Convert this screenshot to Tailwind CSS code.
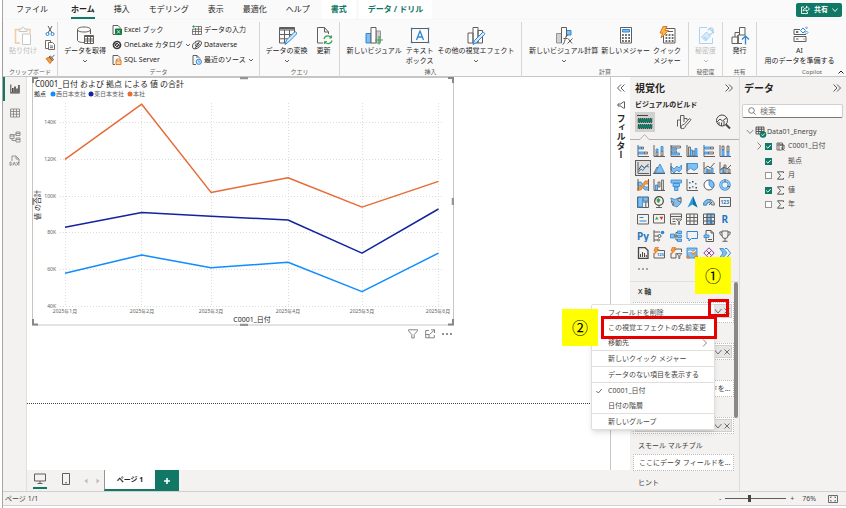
<!DOCTYPE html>
<html lang="ja">
<head>
  <meta charset="UTF-8" />
  <meta name="viewport" content="width=device-width, initial-scale=1" />
  <title>Data01_Energy - レポート</title>
  <script src="https://cdn.jsdelivr.net/npm/@tailwindcss/browser@4"></script>
  <style>
    body {
      font-family: 'Noto Sans', 'Noto Sans CJK JP', sans-serif;
    }
  </style>
</head>
<body class="bg-white text-[#252423] text-[7px] leading-[10px]">
<div class="h-screen flex flex-col ml-0.5 pb-0.5 border-l border-[#a8a6a4]">

  <!-- Tabs -->
  <header class="bg-[#fafafa] h-5 flex items-start pl-1 pr-1 text-[8px] leading-[18px]">
    <nav class="flex gap-px flex-grow">
      <a href="#" class="px-[9px] mr-1">ファイル</a>
      <a href="#" class="px-[9px] font-bold"><span class="block h-[19px] border-b-2 border-[#117865]">ホーム</span></a>
      <a href="#" class="px-[9px]">挿入</a>
      <a href="#" class="px-[9px]">モデリング</a>
      <a href="#" class="px-[9px]">表示</a>
      <a href="#" class="px-[9px]">最適化</a>
      <a href="#" class="px-[9px]">ヘルプ</a>
      <a href="#" class="px-[9px] ml-0.5 bg-white text-[#117865] font-bold">書式</a>
      <a href="#" class="px-[9px] ml-0.5 bg-white text-[#117865] font-bold">データ / ドリル</a>
    </nav>
    <button class="mt-[3px] h-3.5 w-[46px] rounded-xs bg-[#117865] text-white text-[7px] leading-[14px] font-bold flex items-center justify-center gap-1">
      <svg class="w-2.5 h-2.5" viewBox="0 0 10 10" fill="none" stroke="white" stroke-width=".9"><path d="M4 2H1.500v6.500h6V7M3 6c.3-2 1.500-3 3.500-3V1.200L9.500 4 6.500 6.500V5C5 5 4 5.300 3 6z"/></svg>
      共有
      <svg class="w-1.5 h-1.5" viewBox="0 0 6 6" fill="none" stroke="white" stroke-width=".9"><path d="M.5 1.500 3 4.500 5.500 1.500"/></svg>
    </button>
  </header>

  <!-- Ribbon -->
  <section class="bg-[#fafafa] border-b border-[#c8c6c4] h-[57px] pt-0.5 grid grid-cols-[55fr_202fr_80fr_182fr_167fr_34fr_34fr_89fr] shadow-sm">
    <div class="border-r border-[#d8d6d4] flex flex-col">
      <div class="h-[45px] flex items-start pt-1 pl-1.5 gap-2">
        <button class="flex flex-col items-center text-[#bdbbb9]">
          <svg class="w-5 h-5" viewBox="0 0 20 20" fill="none" stroke-width="1"><path d="M7 17H2.500V3.500H6M14 3.500h3V7" stroke="#f3cda4" stroke-width="1.500"/><path d="M6 5.500V3h2.500c0-2.500 3-2.500 3 0H14v2.500z" stroke="#c8c6c4"/><path d="M9.500 8h8v10.500h-8z" stroke="#c8c6c4" fill="#fff"/></svg>
          貼り付け
        </button>
        <div class="flex flex-col gap-1 items-center">
          <button aria-label="切り取り"><svg class="w-2.5 h-2.5" viewBox="0 0 10 10" fill="none" stroke="#605e5c"><path d="M3 0l4 7M7 0L3 7"/><circle cx="2.500" cy="8" r="1.500" stroke="#2b88d8"/><circle cx="7.500" cy="8" r="1.500" stroke="#2b88d8"/></svg></button>
          <button aria-label="コピー"><svg class="w-2.5 h-2.5" viewBox="0 0 10 10" fill="#fff" stroke="#605e5c" stroke-width=".9"><path d="M.5.5h5v8h-5z"/><path d="M3.500 2.500h4l2 2v5h-6zM5 6h3M5 7.700h3"/></svg></button>
          <button aria-label="書式のコピー"><svg class="w-2.5 h-2.5" viewBox="0 0 10 10" fill="none"><path d="M1 4.500l4-1.500 2.500 3-2.500 3.500z" fill="#f5a04c" stroke="#d9761a"/><path d="M4 3l1.500-1 3 3.500-1 1.200zM7 3.500L9.500.8" stroke="#605e5c"/></svg></button>
        </div>
      </div>
      <p class="text-center text-[6px] text-[#605e5c]">クリップボード</p>
    </div>

    <div class="border-r border-[#d8d6d4] flex flex-col">
      <div class="h-[45px] flex items-start pl-1.5">
        <button class="flex flex-col items-center pt-1 mr-1.5">
          <svg class="w-5 h-5" viewBox="0 0 20 20" fill="none" stroke="#605e5c"><path d="M9 16.500c-4 0-6.500-1-6.500-2V3.500C2.500 2 5 1 9 1s6.500 1 6.500 2.500V8M2.500 3.500C2.500 5 5 6 9 6s6.500-1 6.500-2.500"/><path d="M9.500 9.500h9v8h-9z" fill="#fff"/><path d="M9.500 10.500h9M9.500 13h9M9.500 15h9M12.500 9.500v8M15.500 9.500v8"/></svg>
          データを取得
          <svg class="w-1.5 h-1.5 mt-0.5" viewBox="0 0 6 6" fill="none" stroke="#605e5c"><path d="M1 2l2 2 2-2"/></svg>
        </button>
        <div class="flex flex-col w-20 leading-[15px]">
          <button class="flex items-center gap-0.5"><svg class="w-2.5 h-2.5" viewBox="0 0 10 10" fill="none" stroke="#605e5c"><path d="M1 .5h5l2 2v1M1 .5v9h2"/><path d="M3.500 4h6v5.500h-6z" fill="#107c41" stroke="#107c41"/><path d="M5 5.200L8 8.500M8 5.200L5 8.500" stroke="#fff" stroke-width=".8"/></svg>Excel ブック</button>
          <button class="flex items-center gap-0.5"><svg class="w-2.5 h-2.5" viewBox="0 0 10 10" fill="none" stroke="#3b3a39"><circle cx="5" cy="5" r="3.500" stroke-width="1.700"/><path d="M1 4c3-2 3 3 8 1.500M5 3L7 5 5 7 3 5z"/></svg>OneLake カタログ<svg class="w-1.5 h-1.5" viewBox="0 0 6 6" fill="none" stroke="#605e5c"><path d="M1 2l2 2 2-2"/></svg></button>
          <button class="flex items-center gap-0.5"><svg class="w-2.5 h-2.5" viewBox="0 0 10 10" fill="none" stroke="#605e5c"><path d="M1 .5h5l2 2v1M1 .5v9h2"/><path d="M4 5.500h5v4H4z" fill="#fbd6ae" stroke="#e07a1c"/><ellipse cx="6.500" cy="5" rx="2.500" ry="1" fill="#fff" stroke="#e07a1c"/></svg>SQL Server</button>
        </div>
        <div class="flex flex-col leading-[15px]">
          <button class="flex items-center gap-0.5"><svg class="w-2.5 h-2.5" viewBox="0 0 10 10" fill="none" stroke="#605e5c" stroke-width=".8"><path d="M3.500 1.500h6v8h-9V4M.5 6.500h9M.5 4.200h9M3.500 3v6.500M6.500 1.500v8"/><path d="M0 1.500h3.500M1.700 0v3.500" stroke="#2d9d4c"/></svg>データの入力</button>
          <button class="flex items-center gap-0.5"><svg class="w-2.5 h-2.5" viewBox="0 0 10 10" fill="none" stroke="#3b3a39" stroke-width=".9"><path d="M3 2c2-1.500 7-1.500 6.500 1S7 8 4 8.700.3 8 .6 5.500 2 3 4 2.700"/><path d="M4 6.500C2.500 5.500 4.500 3 6.500 3.500S6.500 7 4 6.500zM3 8.500L7.500 1.500"/></svg>Dataverse</button>
          <button class="flex items-center gap-0.5"><svg class="w-2.5 h-2.5" viewBox="0 0 10 10" fill="none" stroke="#605e5c"><path d="M4 9.500H1v-9h4l3 3M5 .5V3"/><circle cx="6.800" cy="6.800" r="2.600" fill="#d5e9fa" stroke="#2b88d8"/><path d="M6.700 5.500V7H8" stroke="#2b88d8" stroke-width=".7"/></svg>最近のソース<svg class="w-1.5 h-1.5" viewBox="0 0 6 6" fill="none" stroke="#605e5c"><path d="M1 2l2 2 2-2"/></svg></button>
        </div>
      </div>
      <p class="text-center text-[6px] text-[#605e5c]">データ</p>
    </div>

    <div class="border-r border-[#d8d6d4] flex flex-col">
      <div class="h-[45px] flex items-start justify-center pt-1 gap-1.5">
        <button class="flex flex-col items-center">
          <svg class="w-5 h-5" viewBox="0 0 20 20" fill="none" stroke="#605e5c"><path d="M9 17H2.500V1.500h15V7M2.500 4h15M2.500 8.500H16M2.500 12.800H11M7.500 4v13M12.500 4v7"/><path d="M2.500 2.500h15" stroke-width="1.500"/><path d="M8 18.500l1.500-4.500 8-8c1-1 3 1 2 2l-8 8z" fill="#d5e9fa" stroke="#2b88d8"/></svg>
          データの変換
          <svg class="w-1.5 h-1.5 mt-0.5" viewBox="0 0 6 6" fill="none" stroke="#605e5c"><path d="M1 2l2 2 2-2"/></svg>
        </button>
        <button class="flex flex-col items-center">
          <svg class="w-5 h-5" viewBox="0 0 20 20" fill="none" stroke="#605e5c"><path d="M9 17H3.500V1.500h7l4 4.500v2M10.500 1.500V6h4"/><path d="M10 13c1-4 6-4 7.500-1V9.500M17.500 12H15M18 14.500c-1 4-6 4-7.500 1V18M10.500 15.500H13" stroke="#3aa655" stroke-width="1.200"/></svg>
          更新
        </button>
      </div>
      <p class="text-center text-[6px] text-[#605e5c]">クエリ</p>
    </div>

    <div class="border-r border-[#d8d6d4] flex flex-col">
      <div class="h-[45px] flex items-start justify-center pt-1 gap-1">
        <button class="flex flex-col items-center">
          <svg class="w-5 h-5" viewBox="0 0 20 20" fill="none" stroke="#605e5c"><path d="M12 5h4.500v12H12z" fill="#d2d0ce" stroke="#979593"/><path d="M2 7.500h5V17H2z" fill="#83beec" stroke="#2b88d8"/><path d="M7 1.500h5V17H7z" fill="#fff"/><path d="M11 14h8M15 10v8.500" stroke="#3aa655" stroke-width="1.200"/></svg>
          新しいビジュアル
        </button>
        <button class="flex flex-col items-center">
          <svg class="w-5 h-5" viewBox="0 0 20 20" fill="none"><path d="M1.500 2.500h17v14h-17z" stroke="#605e5c"/><path d="M.8 1.800h1.800v1.800H.8zM17.500 1.800h1.800v1.800h-1.800zM.8 15.500h1.800v1.800H.8zM17.500 15.500h1.800v1.800h-1.800z" fill="#2b88d8"/><path d="M6.500 14L10 5l3.500 9M7.700 11h4.600" stroke="#2b88d8" stroke-width="1.300"/></svg>
          テキスト<br />ボックス
        </button>
        <button class="flex flex-col items-center">
          <svg class="w-5 h-5" viewBox="0 0 20 20" fill="none" stroke="#605e5c"><path d="M2 7h5v10H2zM7 1.500h5V17H7zM12 4.500h4.500V17H12z" fill="#fff"/><path d="M7 18.500l1.500-4 8-8c1-1 3 1 2 2l-8 8z" fill="#d5e9fa" stroke="#2b88d8"/></svg>
          その他の視覚エフェクト
          <svg class="w-1.5 h-1.5 mt-0.5" viewBox="0 0 6 6" fill="none" stroke="#605e5c"><path d="M1 2l2 2 2-2"/></svg>
        </button>
      </div>
      <p class="text-center text-[6px] text-[#605e5c]">挿入</p>
    </div>

    <div class="border-r border-[#d8d6d4] flex flex-col">
      <div class="h-[45px] flex items-start justify-center pt-1 gap-[3px]">
        <button class="flex flex-col items-center">
          <svg class="w-5 h-5" viewBox="0 0 20 20" fill="none" stroke="#605e5c"><path d="M2.500 7.500h5V17h-5z" fill="#d2d0ce" stroke="#979593"/><path d="M12.500 4.500H17V9h-4.500z" fill="#83beec" stroke="#2b88d8"/><path d="M7.500 17V1.500h5V11"/><path d="M8.500 18.500c2.500 0 2.500-10 5.500-9.500M9.500 12.500h4M14 12.500l4 5M18.500 12.500l-5 5"/></svg>
          新しいビジュアル計算
          <svg class="w-1.5 h-1.5 mt-0.5" viewBox="0 0 6 6" fill="none" stroke="#605e5c"><path d="M1 2l2 2 2-2"/></svg>
        </button>
        <button class="flex flex-col items-center">
          <svg class="w-5 h-5" viewBox="0 0 20 20" fill="none"><path d="M4.500 1.500h11v15.500h-11z" stroke="#605e5c" fill="#fff"/><path d="M6.500 3.500h7v2.500h-7z" fill="#83beec" stroke="#2b88d8"/><path d="M6 9h8M6 12h8M6 15h8" stroke="#3b3a39" stroke-width="1.600" stroke-dasharray="1.800 1.300"/></svg>
          新しいメジャー
        </button>
        <button class="flex flex-col items-center">
          <svg class="w-5 h-5" viewBox="0 0 20 20" fill="none"><path d="M6.500 2.500H18V17H6.500z" stroke="#605e5c" fill="#fff"/><path d="M9 5.500h7" stroke="#605e5c"/><path d="M8.500 9h8M8.500 12h8M8.500 15h8" stroke="#3b3a39" stroke-width="1.600" stroke-dasharray="1.800 1.300"/><path d="M6 .5h4L8 4.500h3.500L4 12l1.500-5H3z" fill="#fbb454" stroke="#e07a1c"/></svg>
          クイック<br />メジャー
        </button>
      </div>
      <p class="text-center text-[6px] text-[#605e5c]">計算</p>
    </div>

    <div class="border-r border-[#d8d6d4] flex flex-col">
      <div class="h-[45px] flex items-start justify-center pt-1">
        <button class="flex flex-col items-center text-[#bdbbb9]">
          <svg class="w-5 h-5" viewBox="0 0 20 20" fill="none" stroke="#a9d3f2"><path d="M11 1.500H3.500V17.500h13V12"/><path d="M5.500 11l5-5 4 4-5 5z" fill="#d5e9fa"/><path d="M8 11l3 3M12 4.500c1-3 4-3.500 5-1s-1 5-4 5M14 3l4 4" stroke-width="1.300"/></svg>
          秘密度
          <svg class="w-1.5 h-1.5 mt-0.5" viewBox="0 0 6 6" fill="none" stroke="#bdbbb9"><path d="M1 2l2 2 2-2"/></svg>
        </button>
      </div>
      <p class="text-center text-[6px] text-[#605e5c]">秘密度</p>
    </div>

    <div class="border-r border-[#d8d6d4] flex flex-col">
      <div class="h-[45px] flex items-start justify-center pt-1">
        <button class="flex flex-col items-center">
          <svg class="w-5 h-5" viewBox="0 0 20 20" fill="none" stroke="#605e5c"><path d="M2 11h6v6.500H2zM5 11V6.500h4.500M8 17.500V9M9.500 9V1.500H15V9M12 17.500H8V9h7"/><path d="M15.500 18.500V10M12 13.500l3.500-3.500 3.500 3.500" stroke="#2b88d8" stroke-width="1.300"/></svg>
          発行
        </button>
      </div>
      <p class="text-center text-[6px] text-[#605e5c]">共有</p>
    </div>

    <div class="flex flex-col">
      <div class="h-[45px] flex items-start justify-center pt-1 pr-1">
        <button class="flex flex-col items-center">
          <svg class="w-5 h-5" viewBox="0 0 20 20" fill="none" stroke="#605e5c"><path d="M10 3.500H4v5h12M4 10.500h12v5H4zM6 6h2.500M6 13h2.500M13.500 13h1"/><path d="M6 6h2" stroke-width="1.600"/><path d="M13 2l2.500 2.500L13 7l-2.500-2.500z" fill="#fff" stroke="#2b88d8"/><path d="M16.500 5L18 6.500 16.500 8 15 6.500zM16.500.8l1 1-1 1-1-1z" stroke="#2b88d8" stroke-width=".8"/></svg>
          AI<br />用のデータを準備する
        </button>
      </div>
      <div class="flex items-center justify-end pr-0.5 gap-4 text-[6px] text-[#605e5c]">
        Copilot
        <button aria-label="リボンを折りたたむ"><svg class="w-1.5 h-1.5" viewBox="0 0 6 6" fill="none" stroke="#252423"><path d="M.5 4.500 3 2l2.500 2.500"/></svg></button>
      </div>
    </div>
  </section>

  <div class="flex flex-grow min-h-0">
    <!-- View switcher -->
    <aside class="w-6 shrink-0 bg-[#f3f2f1] border-r border-[#e1dfdd] flex flex-col">
      <button class="h-6 w-full flex items-center justify-center border-l-2 border-[#117865] pr-0.5" aria-label="レポート ビュー"><svg class="w-2.5 h-2.5" viewBox="0 0 10 10" fill="#484644"><path d="M.3.500h1V8.300h8.500v1.200H.3z"/><path d="M2 4h1.600v4H2zM4.200 2.500h1.600V8H4.200zM6.300 4.500h1.500V8H6.300zM8.200 1h1.500v7H8.200z"/></svg></button>
      <button class="h-6 flex items-center justify-center" aria-label="テーブル ビュー"><svg class="w-2.5 h-2.5" viewBox="0 0 10 10" fill="none" stroke="#8a8886" stroke-width=".9"><path d="M.5 1h9v8h-9zM.5 3.500h9M.5 6.200h9M3.500 1v8M6.500 1v8"/></svg></button>
      <button class="h-6 flex items-center justify-center" aria-label="モデル ビュー"><svg class="w-3 h-3" viewBox="0 0 12 12" fill="none" stroke="#8a8886" stroke-width=".9"><path d="M1 3.500h4v4H1zM7 1h4v3.500H7zM7 7h4v4H7zM1 5h4M7 2.500h4M7 8.500h4M3 7.500V9.500h4M5 4.500l2-1.500"/></svg></button>
      <button class="h-6 flex items-center justify-center" aria-label="DAX クエリ ビュー"><svg class="w-3 h-3" viewBox="0 0 12 12" fill="none" stroke="#8a8886" stroke-width=".9"><path d="M3 6V1h4l3 3v5.500M7 1v3h3M1 7v3.500c2.500 0 2.500-3.500 0-3.500M4 10.500L5.300 7l1.300 3.500M7.500 7l2.300 3.500M9.800 7l-2.300 3.500"/></svg></button>
    </aside>

    <div class="flex flex-col flex-grow min-w-0">
      <div class="flex flex-grow min-h-0">
        <!-- Report canvas -->
        <main class="flex-grow min-w-0 pl-[5px] bg-white flex flex-col">
          <div class="w-[422px] max-w-full">
            <svg class="w-full h-auto block" viewBox="0 0 422 249" fill="none">
              <path d="M.5.500h421v247.500H.5z" stroke="#c8c6c4"/>
              <path d="M1 6V1h5M416 1h5v5M1 242v5.500h5M416 247.500h5V242" stroke="#8a8886" stroke-width="2"/>
              <path d="M208 1h8M208 248h8M1 121v7M421 121v7" stroke="#979593" stroke-width="2.500"/>
              <text x="3" y="9.500" font-size="8" fill="#252423">C0001_日付 および 拠点 による 値 の合計</text>
              <g font-size="6" fill="#605e5c">
                <text x="2" y="19" fill="#252423">拠点</text>
                <circle cx="21" cy="17" r="2.500" fill="#118dff"/><text x="24" y="19">西日本支社</text>
                <circle cx="59" cy="17" r="2.500" fill="#12239e"/><text x="62" y="19">東日本支社</text>
                <circle cx="98" cy="17" r="2.500" fill="#e66c37"/><text x="101" y="19">本社</text>
              </g>
              <path d="M28 45.500h383M28 82.500h383M28 119.500h383M28 155.500h383M28 192.500h383M28 229.500h383M33.500 26v203M109.500 26v203M179.500 26v203M256.500 26v203M330.500 26v203M406.500 26v203" stroke="#dedcda" stroke-dasharray="1 2"/>
              <g font-size="5" fill="#605e5c" text-anchor="end">
                <text x="24" y="47">140K</text><text x="24" y="84">120K</text><text x="24" y="121">100K</text>
                <text x="24" y="157">80K</text><text x="24" y="194">60K</text><text x="24" y="231">40K</text>
              </g>
              <g font-size="5" fill="#605e5c" text-anchor="middle">
                <text x="33" y="236">2025年1月</text><text x="110" y="236">2025年2月</text><text x="179" y="236">2025年3月</text>
                <text x="256" y="236">2025年4月</text><text x="330" y="236">2025年5月</text><text x="406" y="236">2025年6月</text>
              </g>
              <text x="220" y="245" font-size="7" fill="#252423" text-anchor="middle">C0001_日付</text>
              <text transform="translate(8 128) rotate(-90)" font-size="7" fill="#252423" text-anchor="middle">値 の合計</text>
              <g stroke-width="1.500" stroke-linejoin="round">
                <path d="M33 82.300 109.700 27.200 179 115.400 256 100.700 330 130.100 406.500 104.400" stroke="#e66c37"/>
                <path d="M33 150.300 109.700 135.600 179 139.300 256 143 330 176.100 406.500 132" stroke="#12239e"/>
                <path d="M33 196.200 109.700 177.900 179 190.700 256 185.200 330 214.600 406.500 176.100" stroke="#118dff"/>
              </g>
            </svg>
            <div class="flex justify-end gap-[7px] h-4 items-center pr-0.5">
              <button aria-label="フィルター"><svg class="w-2.5 h-2.5" viewBox="0 0 10 10" fill="none" stroke="#797775" stroke-width=".9"><path d="M.5.800h9v1L6.200 5.500V9H3.800V5.500L.5 1.800z"/></svg></button>
              <button aria-label="フォーカス モード"><svg class="w-2.5 h-2.5" viewBox="0 0 10 10" fill="none" stroke="#797775" stroke-width=".9"><path d="M4 1.500H.7v7.300h8.600V6M4.500 5.500l5-4.500M6 .8h3.500V4M.7 5.500H4v3"/></svg></button>
              <button aria-label="その他のオプション"><svg class="w-2.5 h-2.5" viewBox="0 0 10 10" fill="#605e5c"><circle cx="1" cy="5" r=".9"/><circle cx="5" cy="5" r=".9"/><circle cx="9" cy="5" r=".9"/></svg></button>
            </div>
          </div>
          <svg class="h-px w-full -ml-[5px] mt-[61px] shrink-0"><path d="M0 .5H4000" stroke="#484644" stroke-width="1" stroke-dasharray="1 1"/></svg>
        </main>

        <!-- Filter pane, collapsed -->
        <aside class="w-5 shrink-0 border-l border-[#c8c6c4] bg-white flex flex-col items-center pt-[7px] gap-[7px]">
          <button aria-label="展開"><svg class="w-2 h-2" viewBox="0 0 8 8" fill="none" stroke="#484644" stroke-width=".9"><path d="M4 .5.500 4 4 7.500M7.500.5 4 4l3.500 3.500"/></svg></button>
          <svg class="w-2 h-2 mt-0.5" viewBox="0 0 8 8" fill="none" stroke="#484644" stroke-width=".9"><path d="M7.500.800v6.400H6.700L3.500 5H1V3h2.500L6.700.800z"/></svg>
          <h2 class="[writing-mode:vertical-rl] text-[9px] font-bold -mt-0.5">フィルター</h2>
        </aside>
      </div>

      <!-- Page tabs -->
      <div class="h-[21px] shrink-0 bg-[#f3f2f1] flex items-stretch">
        <button class="w-[25px] flex flex-col items-center justify-end" aria-label="デスクトップ レイアウト">
          <svg class="w-3 h-3" viewBox="0 0 12 12" fill="none" stroke="#605e5c"><path d="M.5 2h11v7H.5zM6 9v2M3.500 11.500h5"/></svg>
          <span class="w-3.5 h-0.5 bg-[#117865] mt-[3px] mb-0.5"></span>
        </button>
        <button class="w-7 flex items-start pt-[3px] justify-center" aria-label="モバイル レイアウト"><svg class="w-2 h-3" viewBox="0 0 8 12" fill="none" stroke="#605e5c"><path d="M.5.500h7v11h-7zM3 9.800h2"/></svg></button>
        <button class="w-3 flex items-center justify-center" aria-label="前のページ"><svg class="w-1 h-1.5" viewBox="0 0 4 6" fill="#bdbbb9"><path d="M3.500.5v5L.5 3z"/></svg></button>
        <button class="w-3 flex items-center justify-center" aria-label="次のページ"><svg class="w-1 h-1.5" viewBox="0 0 4 6" fill="#bdbbb9"><path d="M.5.500v5l3-2.500z"/></svg></button>
        <button class="w-[51px] bg-white border-l border-l-[#979593] border-b-2 border-b-[#117865] font-bold">ページ 1</button>
        <button class="w-6 bg-[#117865] text-white flex items-center justify-center" aria-label="新しいページ"><svg class="w-2 h-2" viewBox="0 0 8 8" stroke="white" stroke-width="1.600"><path d="M4 1v6M1 4h6"/></svg></button>
      </div>
    </div>

    <!-- Visualizations pane -->
    <aside class="relative w-[110px] shrink-0 bg-[#f3f2f1] border-r border-[#dedcda] flex flex-col">
      <div class="flex items-center justify-between pl-[5px] pr-1.5 pt-[5px]">
        <h2 class="text-[10px] leading-3 font-bold">視覚化</h2>
        <button aria-label="折りたたむ"><svg class="w-2 h-2" viewBox="0 0 8 8" fill="none" stroke="#484644" stroke-width=".9"><path d="M.5.500 4 4 .5 7.500M4 .5 7.500 4 4 7.500"/></svg></button>
      </div>
      <p class="pl-[5px] pt-1.5 font-semibold">ビジュアルのビルド</p>
      <div class="flex justify-between pl-[5px] pr-1.5 pt-0.5">
        <button class="w-5 h-5 bg-[#d2d0ce] flex items-center justify-center" aria-label="ビルド"><svg class="w-4 h-4" viewBox="0 0 16 16" fill="none"><path d="M0 1.500h11" stroke="#484644"/><path d="M1 4.500h14v4H1zM1 10.500h14v4H1z" fill="#117865" stroke="#484644" stroke-dasharray="1 1"/></svg></button>
        <button class="w-5 h-5 flex items-center justify-center" aria-label="書式"><svg class="w-4 h-4" viewBox="0 0 16 16" fill="none" stroke="#605e5c"><path d="M1.500 6h3v7M4.500 14V1.500h3.500V8M8 4.500h3V6M1.500 6v6.500M5 14.500c0-3 1-4 3-4l5-5.500c1-1 2.500.5 1.500 1.500L9.500 12c0 2-2 3-4.500 2.500z"/></svg></button>
        <button class="w-5 h-5 flex items-center justify-center" aria-label="分析"><svg class="w-4 h-4" viewBox="0 0 16 16" fill="none" stroke="#484644"><circle cx="7" cy="6.500" r="5.500"/><path d="M2 8l3-3 2.500 2L12 3.500M4 8v3M6.500 8.500V12M9 7v4.500" /><path d="M11 10.500l4 4" stroke-width="2"/></svg></button>
      </div>
      <svg class="w-full h-[7px] mt-px shrink-0" fill="none" stroke="#b3b0ad"><path d="M0 6.500h10l4.500-5 4.500 5H4000"/></svg>

      <div id="visual-grid" class="grid grid-cols-6 gap-x-[3px] gap-y-[3px] pl-1.5 pr-[7px] pt-1 justify-items-center"></div>
      <button class="self-start ml-2 h-3.5 mt-0.5 flex items-center" aria-label="その他のビジュアル"><svg class="w-2.5 h-1" viewBox="0 0 10 4" fill="#484644"><circle cx="1" cy="2" r=".8"/><circle cx="5" cy="2" r=".8"/><circle cx="9" cy="2" r=".8"/></svg></button>

      <!-- Field wells -->
      <div class="flex flex-grow min-h-0 mt-[5px] border-t border-[#e1dfdd] overflow-hidden">
        <div class="flex flex-col flex-grow min-w-0 pl-[3px] pt-1 text-[#3b3a39]">
          <h3 class="pl-[5px] h-4 leading-3 shrink-0 font-semibold">X 軸</h3>
          <div class="h-[21px] shrink-0 border border-dotted border-[#bdbbb9] bg-white p-px">
            <div class="h-3.5 bg-[#e8e6e4] border border-[#d2d0ce] flex items-center justify-end gap-0.5 pr-px">
              <svg class="w-2 h-2" viewBox="0 0 8 8" fill="none" stroke="#605e5c" stroke-width=".9"><path d="M.5 2 4 6l3.500-4"/></svg>
              <svg class="w-1.5 h-1.5" viewBox="0 0 6 6" fill="none" stroke="#605e5c" stroke-width=".9"><path d="M.5.500l5 5M5.500.5l-5 5"/></svg>
            </div>
          </div>
          <div class="mt-5 h-[17px] shrink-0 border border-dotted border-[#bdbbb9] bg-white p-px">
            <div class="h-[13px] bg-[#e8e6e4] border border-[#d2d0ce] flex items-center justify-end gap-0.5 pr-px">
              <svg class="w-2 h-2" viewBox="0 0 8 8" fill="none" stroke="#605e5c" stroke-width=".9"><path d="M.5 2 4 6l3.500-4"/></svg>
              <svg class="w-1.5 h-1.5" viewBox="0 0 6 6" fill="none" stroke="#605e5c" stroke-width=".9"><path d="M.5.500l5 5M5.500.5l-5 5"/></svg>
            </div>
          </div>
          <div class="mt-5 h-[17px] shrink-0 border border-dotted border-[#bdbbb9] bg-white pl-[5px] leading-[15px] truncate">ここにデータ フィールドを...</div>
          <div class="mt-5 h-[17px] shrink-0 border border-dotted border-[#bdbbb9] bg-white p-px">
            <div class="h-[13px] bg-[#e8e6e4] border border-[#d2d0ce] flex items-center justify-end gap-0.5 pr-px">
              <svg class="w-2 h-2" viewBox="0 0 8 8" fill="none" stroke="#605e5c" stroke-width=".9"><path d="M.5 2 4 6l3.500-4"/></svg>
              <svg class="w-1.5 h-1.5" viewBox="0 0 6 6" fill="none" stroke="#605e5c" stroke-width=".9"><path d="M.5.500l5 5M5.500.5l-5 5"/></svg>
            </div>
          </div>
          <h3 class="pl-[5px] h-5 pt-[7px] shrink-0">スモール マルチプル</h3>
          <div class="h-[17px] shrink-0 border border-dotted border-[#bdbbb9] bg-white pl-[5px] leading-[15px] truncate">ここにデータ フィールドを...</div>
          <h3 class="pl-[5px] h-5 pt-[7px] shrink-0">ヒント</h3>
        </div>
        <div class="w-1 mr-px shrink-0"><div class="w-1 h-[136px] rounded-full bg-[#8a8886]"></div></div>
      </div>

      <!-- Field context menu -->
      <ul class="absolute -left-[39px] top-[227px] w-[124px] bg-white rounded-xs shadow-md border border-[#e1dfdd] z-10 leading-[15px] text-[#484644]">
        <li><button class="pl-4">フィールドを削除</button></li>
        <li><button class="pl-4">この視覚エフェクトの名前変更</button></li>
        <li class="border-b border-[#e1dfdd]"><button class="w-full pl-4 pr-1.5 flex items-center justify-between">移動先<svg class="w-1.5 h-2" viewBox="0 0 6 8" fill="none" stroke="#797775" stroke-width=".9"><path d="M1 .5 4.500 4 1 7.500"/></svg></button></li>
        <li class="border-b border-[#e1dfdd]"><button class="pl-4">新しいクイック メジャー</button></li>
        <li class="border-b border-[#e1dfdd]"><button class="pl-4">データのない項目を表示する</button></li>
        <li><button class="flex items-center"><svg class="w-1.5 h-1.5 ml-1 mr-1.5" viewBox="0 0 6 6" fill="none" stroke="#605e5c" stroke-width=".9"><path d="M.3 3l2 2L5.800 1"/></svg>C0001_日付</button></li>
        <li class="border-b border-[#e1dfdd]"><button class="pl-4">日付の階層</button></li>
        <li><button class="pl-4">新しいグループ</button></li>
      </ul>

      <!-- Step callouts -->
      <div class="absolute left-[65px] top-[180px] w-9 h-[37px] z-20 bg-[#ffff00] text-black text-[16px] flex items-center justify-center">①</div>
      <div class="absolute left-[78px] top-[222px] w-[21px] h-[18px] z-20 border-3 border-[#e60000]"></div>
      <div class="absolute -left-[68px] top-[232px] w-9 h-[37px] z-20 bg-[#ffff00] text-black text-[16px] flex items-center justify-center">②</div>
      <div class="absolute -left-[29px] top-[239px] w-[116px] h-[23px] z-20 border-3 border-[#e60000]"></div>
    </aside>

    <!-- Data pane -->
    <aside class="w-[106px] shrink-0 bg-[#f3f2f1] flex flex-col">
      <div class="flex items-center justify-between pl-1 pr-[5px] pt-[5px]">
        <h2 class="text-[10px] leading-3 font-bold">データ</h2>
        <button aria-label="折りたたむ"><svg class="w-2 h-2" viewBox="0 0 8 8" fill="none" stroke="#484644" stroke-width=".9"><path d="M.5.500 4 4 .5 7.500M4 .5 7.500 4 4 7.500"/></svg></button>
      </div>
      <label class="mt-2.5 ml-0.5 mr-[3px] h-3.5 bg-white border border-[#d2d0ce] border-b-[#797775] rounded-xs flex items-center gap-1 pl-[5px]">
        <svg class="w-2 h-2 shrink-0" viewBox="0 0 8 8" fill="none" stroke="#605e5c" stroke-width=".8"><circle cx="3.500" cy="3.500" r="2.800"/><path d="M5.500 5.500 7.700 7.700"/></svg>
        <input type="search" placeholder="検索" aria-label="検索" class="w-full min-w-0 text-[8px] leading-3 outline-none placeholder:text-[#797775]" />
      </label>
      <div class="flex items-center h-[14px] mt-[7px] pl-1.5 text-[#484644]">
        <svg class="w-2 h-2 mr-px" viewBox="0 0 8 8" fill="none" stroke="#797775" stroke-width=".9"><path d="M.8 2 4 5.500 7.200 2"/></svg>
        <svg class="w-3 h-3" viewBox="0 0 12 12" fill="none" stroke="#484644" stroke-width=".9"><path d="M1 1h8v7H1zM1 3.200h8M1 5.500h8M3.700 1v7M6.400 1v7"/><circle cx="8" cy="8.500" r="3.300" fill="#117865" stroke="none"/><path d="M6.500 8.500l1.200 1.200L9.700 7.500" stroke="#fff"/></svg>
        Data01_Energy
      </div>
      <ul id="field-list" class="pl-[15px] text-[#484644]"></ul>
    </aside>
  </div>

  <!-- Status bar -->
  <footer class="h-[15px] shrink-0 bg-[#f3f2f1] border-y border-[#d2d0ce] flex items-center justify-between pl-0.5 pr-2 text-[#484644]">
    <span>ページ 1/1</span>
    <div class="flex items-center gap-1">
      <button aria-label="縮小">-</button>
      <input type="range" min="0" max="100" value="39" aria-label="ズーム" class="w-[61px] h-2 appearance-none bg-transparent [&::-webkit-slider-runnable-track]:h-px [&::-webkit-slider-runnable-track]:bg-[#605e5c] [&::-webkit-slider-thumb]:appearance-none [&::-webkit-slider-thumb]:w-[3px] [&::-webkit-slider-thumb]:h-[7px] [&::-webkit-slider-thumb]:-mt-[3px] [&::-webkit-slider-thumb]:bg-[#484644]" />
      <button aria-label="拡大">+</button>
      <span class="ml-1 mr-2">76%</span>
      <button aria-label="ページに合わせる"><svg class="w-2.5 h-2" viewBox="0 0 10 8" fill="none" stroke="#605e5c" stroke-width=".9"><path d="M.5.500h9v7h-9zM2.500 3V2h1.200M6.300 2h1.200v1M7.500 5v1H6.300M3.700 6H2.500V5"/></svg></button>
    </div>
  </footer>
</div>

<script>
  // Icon helpers: gray / blue outlines and blue fill
  const g = d => `<path d="${d}" stroke="#605e5c"/>`;
  const b = d => `<path d="${d}" stroke="#2b88d8"/>`;
  const f = d => `<path d="${d}" fill="#83beec" stroke="#2b88d8" stroke-width=".8"/>`;
  const w = d => `<path d="${d}" fill="#d2d0ce" stroke="#605e5c" stroke-width=".8"/>`;
  const o = d => `<path d="${d}" fill="#f5a04c" stroke="#d9761a" stroke-width=".8"/>`;
  const t = (s, x, y, size) => `<text x="${x}" y="${y}" font-size="${size}" font-weight="bold" fill="#1f78c1">${s}</text>`;
  const axis = g('M1 0v11.500h11');

  const visuals = [
    ['積み上げ横棒グラフ', axis + f('M1.500 2h3v2h-3zM1.500 7h6v2h-6z') + w('M4.500 2h2v2h-2zM7.500 7h3v2h-3z')],
    ['積み上げ縦棒グラフ', axis + w('M3 7h2v4H3zM8 6h2v5H8z') + f('M3 4h2v3H3zM8 1.500h2V6H8z')],
    ['集合横棒グラフ', axis + w('M1.500 1h9v2h-9zM1.500 6h5v2h-5z') + f('M1.500 3h5v2h-5zM1.500 8h8v2h-8z')],
    ['集合縦棒グラフ', axis + w('M2.500 2h2v9h-2zM7 6h2v5H7z') + f('M4.500 5h2v6h-2zM9 3.500h2V11H9z')],
    ['100% 積み上げ横棒グラフ', axis + f('M1.500 2h6v2h-6zM1.500 7h4v2h-4z') + w('M7.500 2h3v2h-3zM5.500 7h5v2h-5z')],
    ['100% 積み上げ縦棒グラフ', axis + w('M3 1h2v4H3zM8 1h2v6H8z') + f('M3 5h2v6H3zM8 7h2v4H8z')],

    ['折れ線グラフ', axis + '<path d="M1.500 8L4.500 3.500l3 2.500L11.500 2" stroke="#484644"/>' + b('M1.500 10L4 7l2 1.500L9 4l3 1')],
    ['面グラフ', w('M1 11l3-6 3 3 2 3z') + f('M2 11l5-9 4.500 9z') + g('M0 11.500h12')],
    ['積み上げ面グラフ', f('M1 4l3 3 3-3 2 2 2.500-3v4L9 10 7 8l-3 3-3-3z') + g('M1 1v10.500h11')],
    ['100% 積み上げ面グラフ', f('M1 1.500h10.500V6L8 8.500 4.500 6 1 9z') + g('M1 1v10.500h11')],
    ['折れ線および積み上げ縦棒グラフ', axis + f('M3 7h2v4H3zM8 6h2v5H8z') + w('M5 8h2v3H5z') + g('M1 7l4-3 2 2 4.500-5')],
    ['折れ線および集合縦棒グラフ', axis + f('M3 6h2v5H3z') + w('M5 3h2v8H5zM9 7h2v4H9z') + g('M1 8l4-3 3 2 4-4')],

    ['リボン グラフ', f('M1 3h3l4 5h3.500v3H8L4 7H1z') + o('M1 8h3l4-6h3.500v3H8l-4 6H1z') + g('M1 0v12M11.500 0v12')],
    ['ウォーターフォール図', axis + f('M2.500 6h2v5h-2z') + w('M5 3h2v5H5zM8.500 1h2v10h-2z')],
    ['じょうごグラフ', f('M1 1h10.500v3H1zM3 4.500h6.500v3H3zM4.500 8h3.500v3.500H4.500z')],
    ['散布図', axis + '<path d="M3 3h1.500v1.500H3zM6 7h1.500v1.500H6zM9 4h1.500v1.500H9z" fill="#2b88d8"/><path d="M6 2h1.500v1.500H6zM3 8h1.500v1.500H3zM9.500 8H11v1.500H9.500z" fill="#484644"/>'],
    ['円グラフ', '<circle cx="6" cy="6" r="5" fill="#fff" stroke="#605e5c"/>' + f('M6 1v5l3.500 3.500A5 5 0 0 0 6 1z')],
    ['ドーナツ グラフ', '<circle cx="6" cy="6" r="4.200" stroke="#2b88d8" stroke-width="3"/><circle cx="6" cy="6" r="4.200" stroke="#9fd0f5" stroke-width="1.500"/>' + g('M6 .5v3M11 8l-3-1')],

    ['ツリーマップ', g('M.5 1h11v10.500H.5z') + f('M1 1.500h4.500V11H1zM6.500 1.500h4.500V5H6.500z') + g('M6 6h5.500M8.800 6v5.500')],
    ['マップ', '<circle cx="6" cy="5" r="4.300" stroke="#484644" stroke-width="1.200"/><path d="M3.500 3.500l2-1.500 2 2-1.500 3-2-1z" fill="#3aa655"/>' + g('M6 9.500v2M3 11.500h6')],
    ['塗り分け地図', f('M.8 2l4 1.500L11 1v6L7 11 3 9.500z') + w('M1 5l3 1.500-1 3zM8 2.500h3V6L8 5z')],
    ['Azure マップ', '<path d="M7 0l4.500 11.500L6.500 8.500 1.500 11.500z" fill="#2b9ad6"/><path d="M7 0v8.500l4.500 3z" fill="#1670a8"/>'],
    ['ゲージ', w('M.5 9a5.500 5.500 0 0 1 11 0H8.500a2.500 2.500 0 0 0-5 0z') + f('M.5 9A5.500 5.500 0 0 1 8 3.800L6.800 6.500A2.500 2.500 0 0 0 3.500 9z') + g('M6 9l3-3')],
    ['カード', g('M.5 1.500h11v9H.5z') + t('123', 1.5, 8, 5)],

    ['複数の行カード', g('M.5 1.500h11v9.500H.5z') + b('M2.500 4.500h4M2.500 8h7')],
    ['KPI', g('M.5 1.500h11v8.500H.5z') + '<path d="M2 6.500L3.800 3.500l1.800 3z" fill="#3aa655"/><path d="M6.500 3.800h3.800L8.400 7z" fill="#d13438"/>'],
    ['スライサー', g('M6 11H.5V1h11v4M.5 3.500h11M2.500 6h3M2.500 8.500h3') + w('M6 6h6L9.500 8.500v3H8.500v-3z')],
    ['テーブル', g('M.5 1h11v10.500H.5zM.5 4.500h11M.5 8h11M4 1v10.500M8 1v10.500')],
    ['マトリックス', f('M4 1h7.500v3.500H4zM4 4.500h4V11H4zM8 8h3.500v3H8z') + g('M.5 1h11v10.500H.5zM.5 4.500h11M.5 8h11M4 1v10.500M8 1v10.500')],
    ['R スクリプト ビジュアル', t('R', 2.5, 10, 10)],

    ['Python ビジュアル', t('Py', 0, 9.5, 10)],
    ['主要なインフルエンサー', g('M1 0v12M1 2h6M1 6h4M1 10h3') + '<circle cx="9.500" cy="2.500" r="1.800" fill="#2b88d8"/><circle cx="6.500" cy="6" r="1.500" stroke="#605e5c"/><circle cx="5.500" cy="10" r="1" stroke="#605e5c"/>'],
    ['分解ツリー', f('M.5 4h4v4h-4zM7.500 1h4v2.500h-4zM7.500 5h4v2.500h-4zM7.500 9h4v2.500h-4z') + g('M4.500 6h3M6 6V2.500h1.500M6 6v4h1.500')],
    ['Q&amp;A', b('M1 1.500h10.500v7H5.500L3 11V8.500H1z')],
    ['スマート詳細', g('M3 .5h5l2.500 2.500v8.500H3zM8 .5V3h2.500M5 9.500h4') + f('M1 5h5v2.500H1z')],
    ['メトリック', g('M3 1h6v4.500a3 3 0 0 1-6 0zM3 2H.8c0 3 1 3.500 2.500 3.500M9 2h2.200c0 3-1 3.500-2.500 3.500M6 8.500V11M3.500 11.300h5')],

    ['ページ分割されたレポート', '<path d="M1.500.500h6.500L11 3.500v8H1.500z" stroke="#484644" stroke-width="1.300"/><path d="M3.500 10V7M5.500 10V5M7.500 10V6M9.300 10V8" stroke="#484644"/>'],
    ['カード (新規)', g('M3 3.500h8.500V11H1V6') + t('123', 4, 9, 4) + o('M2.500 0h3L4 2.500h2L1.500 7l1-3H1z')],
    ['スライサー (新規)', g('M5 2h6.500v3M1 6v5h5V6') + w('M6.500 6.500H12L9.800 9v2.500H8.800V9z') + o('M2.500 0h3L4 2.500h2L1.500 7l1-3H1z')],
    ['ArcGIS', f('M1 1h10v10H1z') + o('M6 4h3v3H6zM9 9h2.500v2.500H9zM1 9h2v2H1z') + '<path d="M2 5c3-3 5 3 8-2" stroke="#fff"/>'],
    ['Power Apps', '<path d="M6 .8 11.200 6 6 11.200.8 6z" stroke="#8a3fa0"/><path d="M3.500 3.500l5 5M8.500 3.500l-5 5" stroke="#8a3fa0"/>'],
    ['Power Automate', f('M.8 1.500h3.500L8 6l-3.700 4.500H.8L4 6z') + b('M6 1.500h2L11.500 6 8 10.500H6')]
  ];

  const grid = document.getElementById('visual-grid');
  visuals.forEach(([label, shape], index) => {
    const btn = document.createElement('button');
    btn.title = label;
    btn.className = index === 6
      ? 'w-3.5 h-3.5 flex items-center justify-center outline outline-[#605e5c] bg-[#e1dfdd]'
      : 'w-3.5 h-3.5 flex items-center justify-center';
    btn.innerHTML = `<svg class="w-3 h-3" viewBox="0 0 12 12" fill="none">${shape}</svg>`;
    grid.appendChild(btn);
  });

  const fields = [
    { name: 'C0001_日付', checked: true, icon: 'date' },
    { name: '拠点', checked: true, icon: '' },
    { name: '月', checked: false, icon: 'sum' },
    { name: '値', checked: true, icon: 'sum' },
    { name: '年', checked: false, icon: 'sum' }
  ];
  const fieldIcons = {
    date: '<path d="M1 1h5.500v7H1zM1 3h5M3 1v7" stroke="#605e5c" stroke-width=".9"/><path d="M4 3h4v4M5 5.500l3.500 3" stroke="#484644" stroke-width=".9"/>',
    sum: '<path d="M7.500 2V.8H1.500L4.500 4.500 1.500 8.200h6V7" stroke="#484644" stroke-width=".9"/>',
    '': ''
  };

  const list = document.getElementById('field-list');
  fields.forEach((field, index) => {
    const li = document.createElement('li');
    li.className = 'h-[14px] odd:mb-px flex items-center';
    const arrow = field.icon === 'date' ? '<path d="M1.500.500 5 4 1.500 7.500" stroke="#797775" stroke-width=".9"/>' : '';
    const tick = field.checked ? '<path d="M1.200 3.500l1.600 1.600L5.800 2" stroke="#fff"/>' : '';
    li.innerHTML = `
      <svg class="w-2.5 h-2 shrink-0" viewBox="0 0 8 8" fill="none">${arrow}</svg>
      <span class="relative flex w-[7px] h-[7px] shrink-0">
        <input type="checkbox" id="field-${index}" ${field.checked ? 'checked' : ''} class="appearance-none w-[7px] h-[7px] border border-[#979593] bg-white checked:bg-[#117865] checked:border-[#117865]" />
        <svg class="absolute inset-0 w-[7px] h-[7px] pointer-events-none" viewBox="0 0 7 7" fill="none">${tick}</svg>
      </span>
      <svg class="w-[9px] h-[9px] shrink-0 ml-1 mr-[3px]" viewBox="0 0 9 9" fill="none">${fieldIcons[field.icon]}</svg>
      <label for="field-${index}">${field.name}</label>`;
    list.appendChild(li);
  });
</script>
</body>
</html>
